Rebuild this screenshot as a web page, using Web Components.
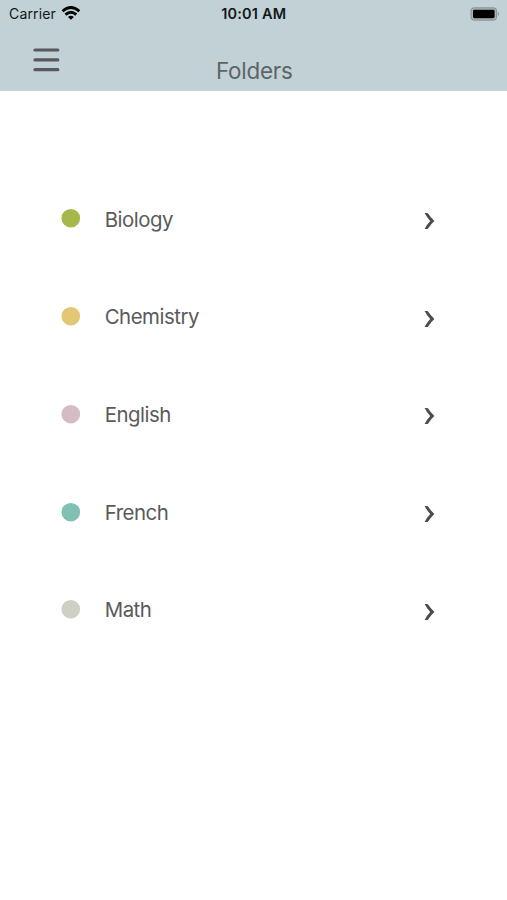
<!DOCTYPE html>
<html lang="en">
<head>
<meta charset="utf-8">
<title>Folders</title>
<style>
html, body { margin: 0; height: 100%; background: #fff; }
body { font-family: Inter, "Liberation Sans", sans-serif; color: #5a5a5a; }
</style>
</head>
<body>
<folder-screen></folder-screen>
<script>
const define = (name, html) => customElements.define(name, class extends HTMLElement {
  constructor() {
    super();
    const t = document.createElement('template');
    t.innerHTML = html;
    this.attachShadow({ mode: 'open' }).append(t.content.cloneNode(true));
  }
});

define('status-bar', `
<style>
:host { display: grid; grid-template-columns: 1fr auto 1fr; align-items: center; height: 28px; padding: 0 7px 0 9px; color: #10181a; font-size: 14px; line-height: 28px; }
.left { display: flex; align-items: center; gap: 5.5px; letter-spacing: .15px; }
.left svg { margin-top: -2px; }
.time { font-size: 14.5px; font-weight: 600; letter-spacing: .2px; margin-right: 1.5px; }
.battery { justify-self: end; margin-top: -1px; }
svg { display: block; }
</style>
<div class="left"><span>Carrier</span>
<svg width="19" height="14" viewBox="-.4 0 19 14" fill="none" stroke="#000" stroke-width="2.8"><path d="M1.1 5.2Q9.5-2.2 17.9 5.2"/><path d="M4.1 8.6Q9.5 3.8 14.9 8.6"/><path d="M9.5 13.7 6.6 10.9Q9.5 8.5 12.4 10.9Z" fill="#000" stroke="none"/></svg></div>
<span class="time">10:01 AM</span>
<svg class="battery" width="30" height="16" viewBox="0 0 30 16"><rect x="1.1" y="1.8" width="25.4" height="12.4" rx="3.5" fill="#aab4b6" stroke="#8b979a" stroke-width="1.2"/><rect x="3" y="3.8" width="21.6" height="8.4" rx="1.4" fill="#000"/><path d="M27.8 5.8Q30.4 8 27.8 10.2Z" fill="#839194"/></svg>`);

define('menu-button', `
<style>
:host { display: block; }
svg { display: block; }
</style>
<svg width="27" height="24" viewBox="0 0 27 24" stroke="#57595b" stroke-width="3.2" stroke-linecap="round"><path d="M2 2H24.8M2 11.9H24.8M2 21.7H24.8"/></svg>`);

define('nav-bar', `
<style>
:host { display: grid; grid-template-columns: 1fr auto 1fr; height: 63px; align-items: start; }
menu-button { margin: 20px 0 0 33px; }
.title { font-size: 22.4px; line-height: 30px; padding: 27.5px 0 0 1.5px; color: #5c6566; letter-spacing: -.25px; }
</style>
<menu-button></menu-button><span class="title"><slot></slot></span>`);

define('folder-row', `
<style>
:host { display: grid; grid-template-columns: 20px 1fr 12px; column-gap: 23.7px; align-items: center; height: 97.7px; }
.name { font-size: 20.4px; line-height: 30px; padding-top: 2.3px; letter-spacing: -.48px; }
svg { display: block; }
.arrow { margin-top: 5.2px; }
.dot { fill: var(--dot); }
</style>
<svg class="dot" width="20" height="20" viewBox="0 0 20 20"><circle cx="9.8" cy="10.2" r="9.3"/></svg><span class="name"><slot></slot></span>
<svg class="arrow" width="12" height="18" viewBox="0 0 12 18" fill="#4c4c4c"><path d="M1.6 1H4.1Q4.7 1 5.1 1.6Q7.9 5.8 11.4 9Q7.9 12.2 5.1 16.4Q4.7 17 4.1 17H1.6Q4 12.3 7.2 9Q4 5.7 1.6 1Z"/></svg>`);

define('folder-screen', `
<style>
:host { display: block; }
header { background: #c1d1d5; }
main { padding: 78.6px 72px 0 61px; }
</style>
<header><status-bar></status-bar><nav-bar>Folders</nav-bar></header>
<main>
<folder-row style="--dot:#a6b84a">Biology</folder-row>
<folder-row style="--dot:#e4c774">Chemistry</folder-row>
<folder-row style="--dot:#d5bcc2">English</folder-row>
<folder-row style="--dot:#80c1b4">French</folder-row>
<folder-row style="--dot:#cfcfc4">Math</folder-row>
</main>`);
</script>
</body>
</html>
